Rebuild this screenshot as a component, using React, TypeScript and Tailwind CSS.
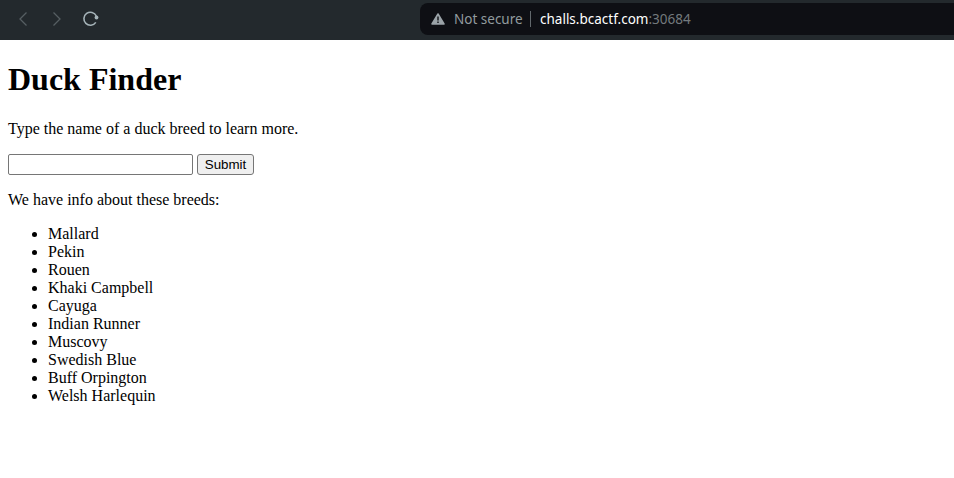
const breeds = ["Mallard","Pekin","Rouen","Khaki Campbell","Cayuga","Indian Runner","Muscovy","Swedish Blue","Buff Orpington","Welsh Harlequin"];

function BrowserBar() {
  return (
    <header className="flex h-10 bg-[#23292d] font-['Noto_Sans',sans-serif] text-[13.5px]">
      <div className="flex w-[420px] shrink-0 items-center pb-0.5 pl-[14px]">
        <svg width="90" height="20" viewBox="0 0 90 20" fill="none" stroke="#565e62" strokeWidth="1.3">
          <path d="M12.500 3.500 6 10l6.500 6.500M39.500 3.500 46 10l-6.500 6.500" />
          <g stroke="#a5b3b8" strokeWidth="1.6">
            <path d="M81.800 13.400A6.500 6.500 0 1 1 82.300 7" />
            <circle cx="82.500" cy="8.500" r="1.900" fill="#a5b3b8" stroke="none" />
          </g>
        </svg>
      </div>
      <div className="mt-[3px] flex h-8 flex-1 items-center rounded-l-lg bg-[#0e0f14] pl-[11px]">
        <svg width="14" height="12" viewBox="0 0 14 12">
          <path d="M7 1 13 11H1Z" fill="#9ba3a8" stroke="#9ba3a8" strokeWidth="1.5" strokeLinejoin="round" />
          <path d="M7 3.500v4M7 8.500V10" stroke="#0e0f14" strokeWidth="1.400" />
        </svg>
        <span className="ml-[9px] w-[69px] whitespace-nowrap text-[#929b9f]">Not secure</span>
        <span className="ml-[7px] h-4 w-px bg-[#62686c]" />
        <span className="ml-[9px] whitespace-nowrap text-white">challs.bcactf.com<span className="text-[#73797d]">:30684</span></span>
      </div>
    </header>
  );
}

export default function App() {
  return (
    <div className="h-[478px] overflow-hidden bg-white font-['Liberation_Serif',serif] text-base leading-[18px] text-black">
      <BrowserBar />
      <main className="px-2">
        <h1 className="pt-[21px] text-[32px] leading-[37px] font-bold">Duck Finder</h1>
        <p className="mt-[22px]">Type the name of a duck breed to learn more.</p>
        <form className="mt-4 flex gap-1" onSubmit={(e) => e.preventDefault()}>
          <input aria-label="Duck breed" className="h-[21px] w-[185px] rounded-[2px] border border-[#767676] px-0.5" />
          <button className="h-[21px] w-[57px] rounded-[3px] border border-[#767676] bg-[#efefef] font-['Liberation_Sans',sans-serif] text-[13.333px] leading-[15px]">Submit</button>
        </form>
        <p className="mt-4">We have info about these breeds:</p>
        <ul className="mt-4 list-disc pl-10">
          {breeds.map((breed) => <li key={breed}>{breed}</li>)}
        </ul>
      </main>
    </div>
  );
}
